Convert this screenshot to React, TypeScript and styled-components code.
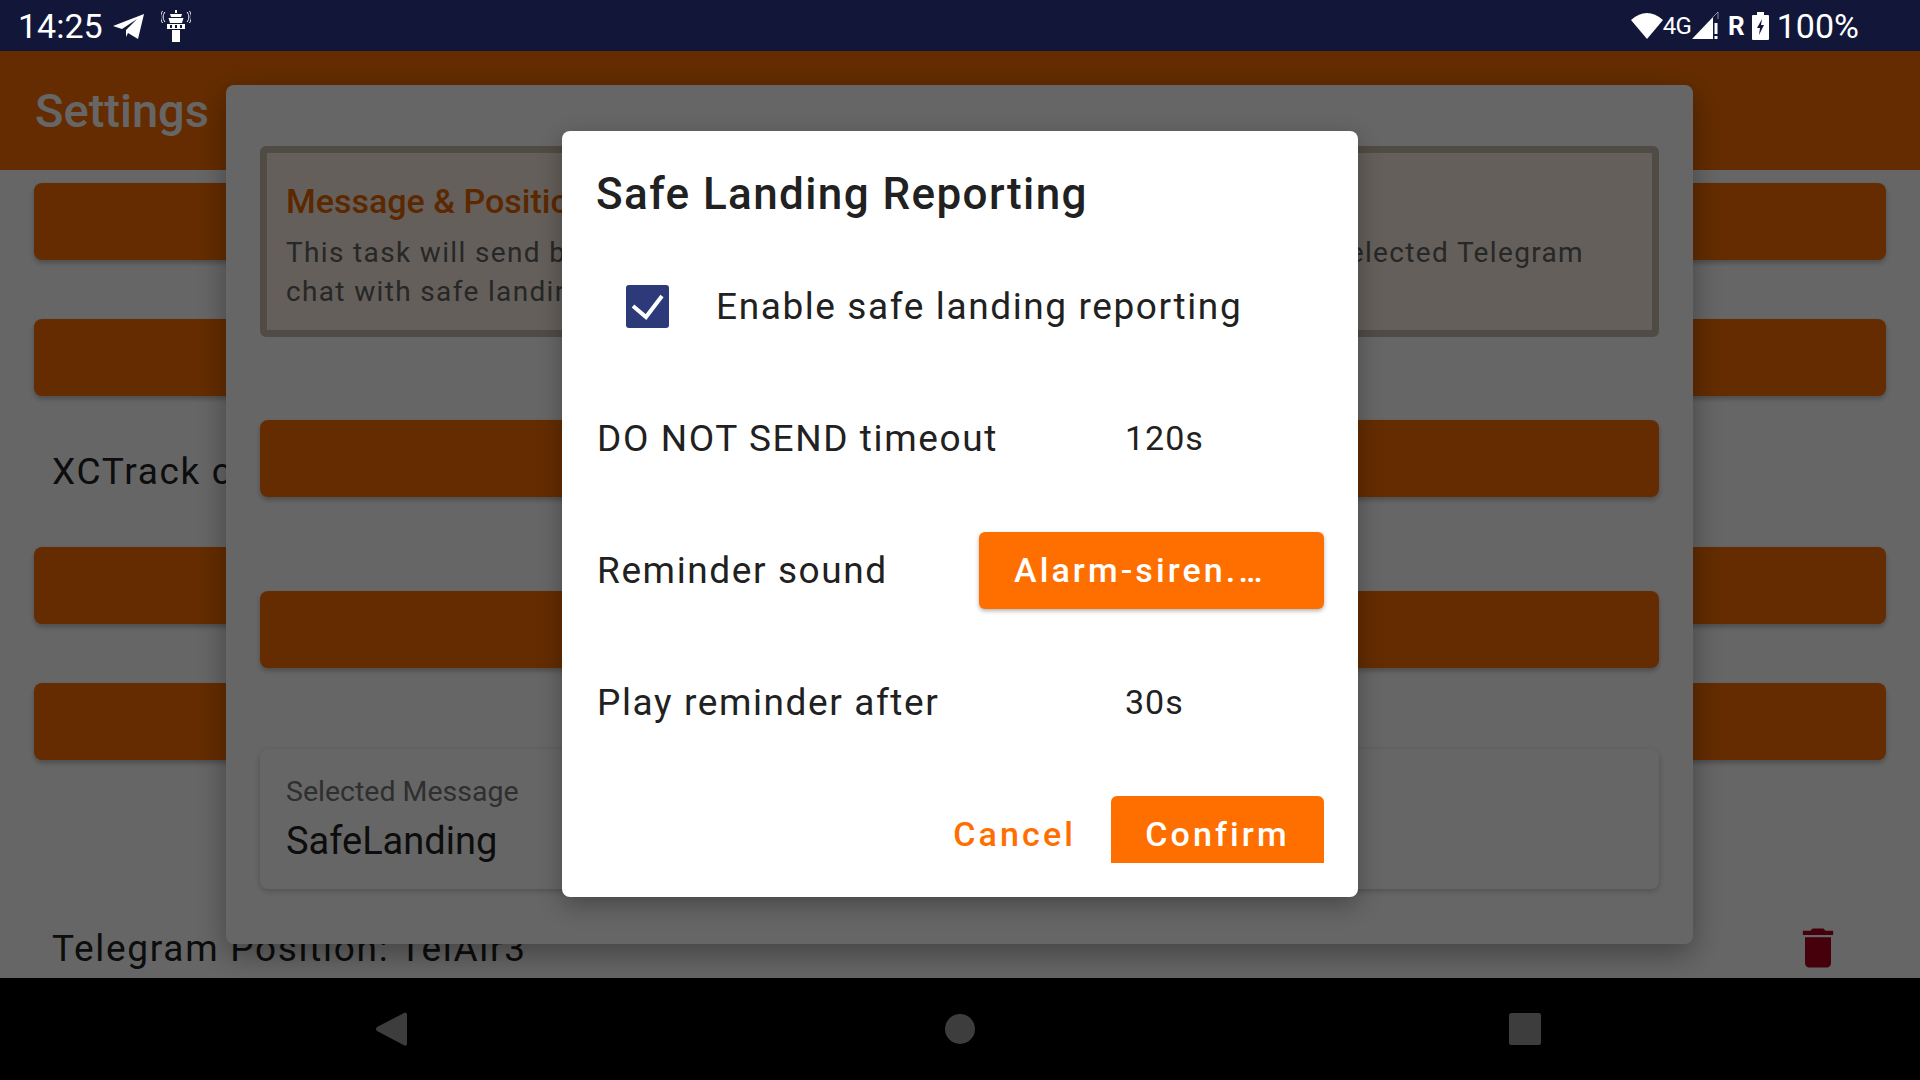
import styled, { createGlobalStyle } from "styled-components";

const GlobalStyle = createGlobalStyle`
  html, body {
    margin: 0;
    padding: 0;
    background: #fff;
  }
  * {
    box-sizing: border-box;
  }
  body {
    font-family: Roboto, "Liberation Sans", sans-serif;
  }
`;

const Screen = styled.div`
  position: relative;
  width: 1920px;
  height: 1080px;
  overflow: hidden;
  display: flex;
  flex-direction: column;
  background: #fff;
`;

const Page = styled.div`
  height: 978px;
  display: flex;
  flex-direction: column;
  padding-top: 51px;
`;

const Header = styled.div`
  height: 119px;
  flex: none;
  display: flex;
  align-items: center;
  padding-left: 35px;
  background: #fb6f00;
  color: #fff;
  font-size: 47px;
  font-weight: 500;
`;

const Body = styled.div`
  display: flex;
  flex-direction: column;
  padding: 13px 34px 0;
`;

const OrangeBar = styled.div<{ $after?: number }>`
  height: 77px;
  flex: none;
  margin-bottom: ${(p) => p.$after ?? 0}px;
  background: #fb6f00;
  border-radius: 8px;
  box-shadow: 0 3px 5px rgba(0, 0, 0, 0.25);
`;

const SectionText = styled.div`
  height: 151px;
  display: flex;
  align-items: center;
  padding-left: 18px;
  font-size: 37px;
  letter-spacing: 1.7px;
  color: #212121;
`;

const TelegramRow = styled.div`
  display: flex;
  align-items: center;
  justify-content: space-between;
  height: 52px;
  margin-top: 162px;
  padding: 0 42px 0 18px;
  font-size: 37px;
  letter-spacing: 1.7px;
  color: #212121;
`;

const TrashIcon = styled.svg`
  width: 52px;
  height: 52px;
  fill: #b00020;
`;

const SettingsDialog = styled.div`
  position: absolute;
  left: 226px;
  top: 85px;
  width: 1467px;
  height: 859px;
  display: flex;
  flex-direction: column;
  padding: 61px 34px 0;
  background: #fff;
  border-radius: 8px;
  box-shadow: 0 10px 30px rgba(0, 0, 0, 0.35);
`;

const InfoBox = styled.div`
  height: 191px;
  flex: none;
  padding: 22px 19px 0;
  background: #fbeee2;
  border: 7px solid #cbbbad;
  border-radius: 6px;
`;

const InfoTitle = styled.div`
  margin-bottom: 6px;
  font-size: 34px;
  font-weight: 500;
  line-height: 52px;
  color: #e66400;
`;

const InfoBody = styled.div`
  padding-right: 49px;
  font-size: 28px;
  line-height: 39px;
  letter-spacing: 1.350px;
  color: #616161;
  display: flex;
  justify-content: space-between;
`;

const DialogBar = styled(OrangeBar)<{ $before: number }>`
  margin-top: ${(p) => p.$before}px;
`;

const SelectedCard = styled.div`
  height: 140px;
  flex: none;
  margin-top: 81px;
  padding: 25px 26px;
  background: #fff;
  border-radius: 8px;
  box-shadow: 0 2px 6px rgba(0, 0, 0, 0.22);
`;

const SelectedLabel = styled.div`
  font-size: 28.500px;
  line-height: 36px;
  color: #757575;
`;

const SelectedValue = styled.div`
  margin-top: 7px;
  font-size: 38px;
  line-height: 48px;
  color: #212121;
`;

const Scrim = styled.div`
  position: absolute;
  inset: 0;
  background: rgba(0, 0, 0, 0.6);
`;

const StatusBar = styled.div`
  position: absolute;
  left: 0;
  top: 0;
  right: 0;
  height: 51px;
  display: flex;
  align-items: center;
  justify-content: space-between;
  padding: 0 61px 0 18px;
  background: #12173a;
  color: #fff;
  font-size: 34px;
`;

const StatusGroup = styled.div`
  display: flex;
  align-items: center;
`;

const StatusGlyph = styled.svg<{ $left?: number }>`
  display: block;
  flex: none;
  margin-left: ${(p) => p.$left ?? 0}px;
  fill: #fff;
`;

const SmallStatus = styled.span<{ $bold?: boolean; $left?: number }>`
  margin-left: ${(p) => p.$left ?? 0}px;
  font-size: ${(p) => (p.$bold ? 26 : 24)}px;
  font-weight: ${(p) => (p.$bold ? 700 : 400)};
  letter-spacing: ${(p) => (p.$bold ? 0 : -0.8)}px;
`;

const BatteryText = styled.span`
  margin-left: 8px;
`;

const NavBar = styled.div`
  height: 102px;
  flex: none;
  display: flex;
  align-items: center;
  justify-content: space-between;
  padding: 0 379px 0 376px;
  background: #000;
`;

const NavIcon = styled.svg`
  display: block;
  fill: #999;
`;

const NavCircle = styled(NavIcon)`
  margin-left: 4px;
`;

const SafeDialog = styled.div`
  position: absolute;
  left: 562px;
  top: 131px;
  width: 796px;
  height: 766px;
  display: flex;
  flex-direction: column;
  padding: 0 34px;
  background: #fff;
  border-radius: 8px;
  box-shadow: 0 8px 24px rgba(0, 0, 0, 0.3);
`;

const DialogTitle = styled.h2`
  margin: 0;
  height: 126px;
  flex: none;
  display: flex;
  align-items: center;
  font-size: 44px;
  font-weight: 500;
  letter-spacing: 1.400px;
  color: #212121;
`;

const CheckRow = styled.div`
  height: 98px;
  margin-bottom: 17px;
  flex: none;
  display: flex;
  align-items: center;
  padding-left: 30px;
  gap: 47px;
`;

const CheckBox = styled.svg`
  width: 43px;
  height: 43px;
  flex: none;
  display: block;
`;

const RowText = styled.span`
  font-size: 37px;
  letter-spacing: 1.600px;
  color: #212121;
  white-space: nowrap;
`;

const SettingRow = styled.div`
  height: 132px;
  flex: none;
  display: grid;
  grid-template-columns: minmax(0, 1fr) 345px;
  align-items: center;
  padding-left: 1px;
`;

const ValueText = styled.span`
  padding-left: 146px;
  font-size: 34px;
  letter-spacing: 1px;
  color: #212121;
`;

const SoundButton = styled.div`
  height: 77px;
  display: flex;
  align-items: center;
  padding-left: 35px;
  background: #ff6f00;
  border-radius: 6px;
  box-shadow: 0 2px 4px rgba(0, 0, 0, 0.3);
  color: #fff;
  font-size: 34px;
  font-weight: 500;
  letter-spacing: 3.100px;
`;

const Actions = styled.div`
  height: 67px;
  margin-top: 28px;
  flex: none;
  display: flex;
  justify-content: flex-end;
  overflow: hidden;
`;

const TextAction = styled.div`
  height: 77px;
  display: flex;
  align-items: center;
  padding: 0 35px 2px 0;
  color: #ff6f00;
  font-size: 34px;
  font-weight: 500;
  letter-spacing: 3.100px;
`;

const ConfirmAction = styled.div`
  width: 213px;
  height: 77px;
  display: flex;
  justify-content: center;
  padding-top: 18px;
  background: #ff6f00;
  border-radius: 6px;
  color: #fff;
  font-size: 34px;
  font-weight: 500;
  letter-spacing: 3.100px;
`;

function Telegram() {
  return (
    <StatusGlyph $left={10} width="31" height="26" viewBox="0 0 31 26">
      <path d="M0 13 L31 1 L25 26 L15 20 L13 24 L13 17 L24 6 L9 16 Z" />
    </StatusGlyph>
  );
}

function Tower() {
  return (
    <StatusGlyph $left={17} width="30" height="32" viewBox="0 0 30 32">
      <path d="M14 0h2v3h-2zM9 4h12l-1 3h-10zM7.500 8h15l-1.500 5h-12zM6 14h18v5h-18zM11 20h8v12h-8z" />
      <path d="M9 15h2v3h-2zM14 15h2v3h-2zM19 15h2v3h-2z" fill="#12173a" />
      <path d="M4 2C1.500 5 1.500 9 4 12M1.500 1C-1 5-1 9 1.500 13M26 2c2.500 3 2.500 7 0 10M28.500 1c2.500 4 2.500 8 0 12" fill="none" stroke="#fff" strokeWidth="1" />
    </StatusGlyph>
  );
}

function Wifi() {
  return (
    <StatusGlyph width="32" height="27" viewBox="0 0 32 27">
      <path d="M0 8 Q16 -6 32 8 L16 27 Z" />
    </StatusGlyph>
  );
}

function Signal() {
  return (
    <StatusGlyph $left={1} width="27" height="28" viewBox="0 0 27 28">
      <path d="M0 27 L21 5 L21 27 Z" />
      <path d="M21 5 L26 0 V7" fill="none" stroke="#fff" strokeOpacity="0.5" strokeWidth="1" />
      <path d="M22.500 11h3v11h-3zM22.500 24h3v3h-3z" />
    </StatusGlyph>
  );
}

function Battery() {
  return (
    <StatusGlyph $left={7} width="17" height="28" viewBox="0 0 17 28">
      <path d="M5 0h7v3h4a1 1 0 0 1 1 1v23a1 1 0 0 1-1 1h-15a1 1 0 0 1-1-1v-23a1 1 0 0 1 1-1h4z" />
      <path d="M10 7 L5 16 L8 16 L7 23 L12 13 L9 13 Z" fill="#12173a" />
    </StatusGlyph>
  );
}

export default function App() {
  return (
    <Screen>
      <GlobalStyle />
      <Page>
        <Header>Settings</Header>
        <Body>
          <OrangeBar $after={59} />
          <OrangeBar />
          <SectionText>XCTrack configuration</SectionText>
          <OrangeBar $after={59} />
          <OrangeBar />
          <TelegramRow>
            <span>Telegram Position: TelAir3</span>
            <TrashIcon viewBox="0 0 24 24">
              <path d="M6 19c0 1.100.9 2 2 2h8c1.100 0 2-.9 2-2V7H6v12zM19 4h-3.500l-1-1h-5l-1 1H5v2h14V4z" />
            </TrashIcon>
          </TelegramRow>
        </Body>
      </Page>
      <NavBar>
        <NavIcon width="31" height="34" viewBox="0 0 31 34">
          <path d="M29 0.500a2 2 0 0 1 2 1.500v30a2 2 0 0 1-2.500 1.500L1 19a2.500 2.500 0 0 1 0-4z" />
        </NavIcon>
        <NavCircle width="30" height="30" viewBox="0 0 30 30">
          <circle cx="15" cy="15" r="15" />
        </NavCircle>
        <NavIcon width="32" height="32" viewBox="0 0 32 32">
          <rect width="32" height="32" rx="2.500" />
        </NavIcon>
      </NavBar>

      <SettingsDialog>
        <InfoBox>
          <InfoTitle>Message &amp; Position</InfoTitle>
          <InfoBody>
            <span>This task will send both</span>
            <span>selected Telegram</span>
          </InfoBody>
          <InfoBody>chat with safe landing</InfoBody>
        </InfoBox>
        <DialogBar $before={83} />
        <DialogBar $before={94} />
        <SelectedCard>
          <SelectedLabel>Selected Message</SelectedLabel>
          <SelectedValue>SafeLanding</SelectedValue>
        </SelectedCard>
      </SettingsDialog>

      <Scrim />

      <StatusBar>
        <StatusGroup>
          14:25
          <Telegram />
          <Tower />
        </StatusGroup>
        <StatusGroup>
          <Wifi />
          <SmallStatus>4G</SmallStatus>
          <Signal />
          <SmallStatus $bold $left={9}>R</SmallStatus>
          <Battery />
          <BatteryText>100%</BatteryText>
        </StatusGroup>
      </StatusBar>

      <SafeDialog>
        <DialogTitle>Safe Landing Reporting</DialogTitle>
        <CheckRow>
          <CheckBox viewBox="0 0 43 43">
            <rect width="43" height="43" rx="3" fill="#2c3a7a" />
            <path d="M7 21 L20 32 L36 11" fill="none" stroke="#fff" strokeWidth="4" />
          </CheckBox>
          <RowText>Enable safe landing reporting</RowText>
        </CheckRow>
        <SettingRow>
          <RowText>DO NOT SEND timeout</RowText>
          <ValueText>120s</ValueText>
        </SettingRow>
        <SettingRow>
          <RowText>Reminder sound</RowText>
          <SoundButton>Alarm-siren.…</SoundButton>
        </SettingRow>
        <SettingRow>
          <RowText>Play reminder after</RowText>
          <ValueText>30s</ValueText>
        </SettingRow>
        <Actions>
          <TextAction>Cancel</TextAction>
          <ConfirmAction>Confirm</ConfirmAction>
        </Actions>
      </SafeDialog>
    </Screen>
  );
}
